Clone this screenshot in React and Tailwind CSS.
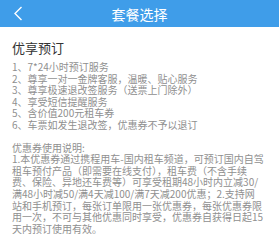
import React from 'react';

const perks = [
  '1、7*24小时预订服务',
  '2、尊享一对一金牌客服，温暖、贴心服务',
  '3、尊享极速退改签服务（送票上门除外）',
  '4、享受短信提醒服务',
  '5、含价值200元租车券',
  '6、车票如发生退改签，优惠券不予以退订',
];

// line breaks follow the reference
const notes = [
  '1.本优惠券通过携程用车-国内租车频道，可预订国内自驾',
  '租车预付产品（即需要在线支付），租车费（不含手续',
  '费、保险、异地还车费等）可享受租期48小时内立减30/',
  '满48小时减50/满4天减100/满7天减200优惠；2.支持网',
  '站和手机预订，每张订单限用一张优惠券，每张优惠券限',
  '用一次，不可与其他优惠同时享受，优惠券自获得日起15',
  '天内预订使用有效。',
];

const App = () => {
  return (
    <div
      className="w-[279px] h-[243px] bg-white overflow-hidden"
      style={{ fontFamily: '"Noto Sans CJK SC", "Noto Sans", sans-serif' }}
    >
      <div className="h-[27px] bg-[#3f9de9] flex items-center relative">
        <svg className="absolute left-[13px] top-[6px]" width="10" height="15" viewBox="0 0 10 15">
          <path d="M8.5 1 L2 7.5 L8.5 14" fill="none" stroke="#fff" strokeWidth="1.4" />
        </svg>
        <div className="flex-1 text-center text-white text-[14px] leading-none">套餐选择</div>
      </div>

      <div className="px-3 pt-[13px]">
        <div className="text-[13px] leading-[16px] text-[#333]">优享预订</div>
        <div className="mt-[5px] text-[10px] leading-[11.6px] text-[#8f8f8f] whitespace-nowrap">
          {perks.map((p) => (
            <div key={p}>{p}</div>
          ))}
          <div className="h-[11px]" />
          <div>优惠券使用说明:</div>
          {notes.map((n) => (
            <div key={n}>{n}</div>
          ))}
        </div>
      </div>
    </div>
  );
};

export default App;
